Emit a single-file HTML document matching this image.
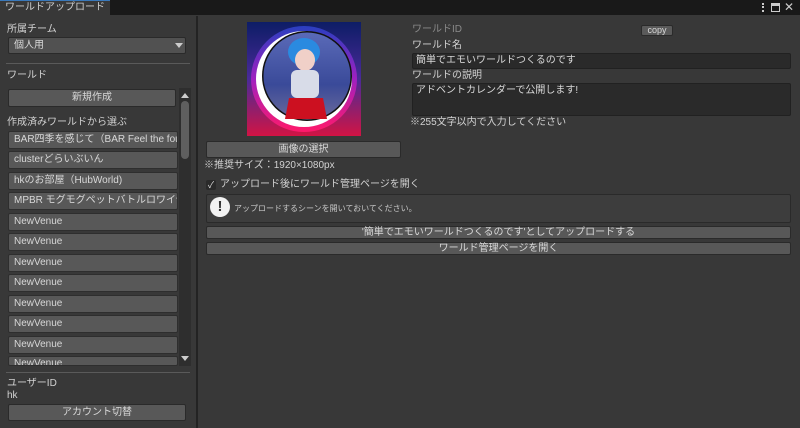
<!DOCTYPE html>
<html><head><meta charset="utf-8">
<style>
*{box-sizing:border-box;margin:0;padding:0}
body{width:800px;height:428px;overflow:hidden;background:#383838;font-family:"Liberation Sans","Noto Sans CJK JP",sans-serif;font-size:10px;line-height:12px;color:#d2d2d2;position:relative}
.a{position:absolute;white-space:nowrap;line-height:12px}
.btn{position:absolute;background:#585858;border:1px solid #2a2a2a;border-radius:2px;color:#d8d8d8;text-align:center;font-size:10px}
.item{position:absolute;left:8px;width:170px;height:18px;background:#585858;border:1px solid #2e2e2e;border-radius:2px;padding-left:5px;line-height:16px;color:#d8d8d8;overflow:hidden;white-space:nowrap}
.field{position:absolute;background:#2a2a2a;border:1px solid #212121;border-radius:2px;padding-left:3px;color:#d8d8d8}
</style></head><body>
<div class="a" style="left:0;top:0;width:800px;height:15px;background:#191919"></div>
<div class="a" style="left:0;top:0;width:110px;height:16px;background:#383838;border-top:1px solid #3a79bb"></div>
<div class="a" style="left:5px;top:2px;font-size:10px;color:#d0d0d0">ワールドアップロード</div>
<div class="a" style="left:762px;top:3px;width:2px;height:9px;border-left:2px dotted #ccc"></div>
<div class="a" style="left:771px;top:3px;width:9px;height:9px;border:1px solid #ccc;border-top:3px solid #ccc"></div>
<div class="a" style="left:784px;top:1px;font-size:12px;color:#ccc">✕</div>

<div class="a" style="left:196px;top:16px;width:2px;height:412px;background:#232323"></div>

<div class="a" style="left:7px;top:24px">所属チーム</div>
<div class="btn" style="left:8px;top:37px;width:178px;height:17px;text-align:left;padding-left:5px;line-height:15px;background:#515151">個人用</div>
<div class="a" style="left:175px;top:43px;width:0;height:0;border-left:4px solid transparent;border-right:4px solid transparent;border-top:5px solid #ccc"></div>
<div class="a" style="left:6px;top:63px;width:184px;height:1px;background:#5a5a5a"></div>
<div class="a" style="left:7px;top:70px">ワールド</div>
<div class="btn" style="left:8px;top:89px;width:168px;height:18px;line-height:16px">新規作成</div>
<div class="a" style="left:7px;top:117px">作成済みワールドから選ぶ</div>
<div class="a" style="left:179px;top:88px;width:12px;height:278px;background:#2e2e2e"></div>
<div class="a" style="left:181px;top:101px;width:8px;height:58px;background:#5f5f5f;border-radius:4px"></div>
<div class="a" style="left:181px;top:93px;border-left:4px solid transparent;border-right:4px solid transparent;border-bottom:5px solid #ccc"></div>
<div class="a" style="left:181px;top:356px;border-left:4px solid transparent;border-right:4px solid transparent;border-top:5px solid #ccc"></div>

<div class="item" style="top:131px">BAR四季を感じて（BAR Feel the four</div>
<div class="item" style="top:151px">clusterどらいぶいん</div>
<div class="item" style="top:172px">hkのお部屋（HubWorld)</div>
<div class="item" style="top:192px">MPBR モグモグペットバトルロワイヤ</div>
<div class="item" style="top:213px">NewVenue</div>
<div class="item" style="top:233px">NewVenue</div>
<div class="item" style="top:254px">NewVenue</div>
<div class="item" style="top:274px">NewVenue</div>
<div class="item" style="top:295px">NewVenue</div>
<div class="item" style="top:315px">NewVenue</div>
<div class="item" style="top:336px">NewVenue</div>
<div class="item" style="top:356px;height:10px;line-height:14px">NewVenue</div>
<div class="a" style="left:6px;top:372px;width:184px;height:1px;background:#5a5a5a"></div>
<div class="a" style="left:7px;top:378px">ユーザーID</div>
<div class="a" style="left:7px;top:390px">hk</div>
<div class="btn" style="left:8px;top:404px;width:178px;height:17px;line-height:15px">アカウント切替</div>

<svg class="a" style="left:247px;top:22px" width="114" height="114" viewBox="0 0 114 114">
<defs><linearGradient id="g" x1="0" y1="0" x2="0" y2="1"><stop offset="0" stop-color="#0d1d66"/><stop offset="0.5" stop-color="#4a2a99"/><stop offset="1" stop-color="#d11444"/></linearGradient>
<linearGradient id="r" x1="0" y1="0" x2="0" y2="1"><stop offset="0" stop-color="#2a3fc0"/><stop offset="0.5" stop-color="#a020c0"/><stop offset="1" stop-color="#ff1a6a"/></linearGradient>
<linearGradient id="s" x1="0" y1="0" x2="0" y2="1"><stop offset="0" stop-color="#5a6ab8"/><stop offset="0.6" stop-color="#3a4a99"/><stop offset="1" stop-color="#6a6a9a"/></linearGradient></defs>
<rect width="114" height="114" fill="url(#g)"/>
<circle cx="57" cy="57" r="53" fill="url(#r)"/>
<circle cx="57" cy="57" r="48" fill="#fff"/>
<circle cx="60" cy="54" r="45" fill="#111"/>
<circle cx="60" cy="54" r="43.5" fill="url(#s)"/>
<ellipse cx="57" cy="30" rx="16" ry="14" fill="#2a8ae0"/>
<ellipse cx="58" cy="38" rx="10" ry="11" fill="#f0d0c8"/>
<rect x="44" y="48" width="28" height="28" rx="6" fill="#d8dce8"/>
<path d="M42 76 L76 76 L80 97 L38 97 Z" fill="#cc1020"/>
</svg>

<div class="btn" style="left:206px;top:141px;width:195px;height:17px;line-height:15px">画像の選択</div>
<div class="a" style="left:204px;top:160px">※推奨サイズ：1920×1080px</div>
<div class="a" style="left:206px;top:180px;width:10px;height:10px;background:#2a2a2a;border-radius:2px;color:#ddd;font-size:9px;line-height:10px;text-align:center">✓</div>
<div class="a" style="left:220px;top:179px">アップロード後にワールド管理ページを開く</div>
<div class="a" style="left:206px;top:194px;width:585px;height:29px;background:#3d3d3d;border:1px solid #2a2a2a;border-radius:2px"></div>
<div class="a" style="left:210px;top:197px;width:20px;height:20px;border-radius:50%;background:#f2f2f2;color:#333;font-weight:bold;font-size:15px;text-align:center;line-height:20px">!</div>
<div class="a" style="left:234px;top:203px;font-size:8px;color:#c8c8c8">アップロードするシーンを開いておいてください。</div>
<div class="btn" style="left:206px;top:226px;width:585px;height:13px;line-height:11px">'簡単でエモいワールドつくるのです'としてアップロードする</div>
<div class="btn" style="left:206px;top:242px;width:585px;height:13px;line-height:11px">ワールド管理ページを開く</div>

<div class="a" style="left:412px;top:24px;color:#8a8a8a">ワールドID</div>
<div class="btn" style="left:641px;top:25px;width:32px;height:11px;line-height:9px;font-size:9px;background:#5a5a5a">copy</div>
<div class="a" style="left:412px;top:40px">ワールド名</div>
<div class="field" style="left:412px;top:53px;width:379px;height:16px;line-height:14px">簡単でエモいワールドつくるのです</div>
<div class="a" style="left:412px;top:70px">ワールドの説明</div>
<div class="field" style="left:412px;top:83px;width:379px;height:33px;line-height:14px">アドベントカレンダーで公開します!</div>
<div class="a" style="left:410px;top:117px">※255文字以内で入力してください</div>
</body></html>
